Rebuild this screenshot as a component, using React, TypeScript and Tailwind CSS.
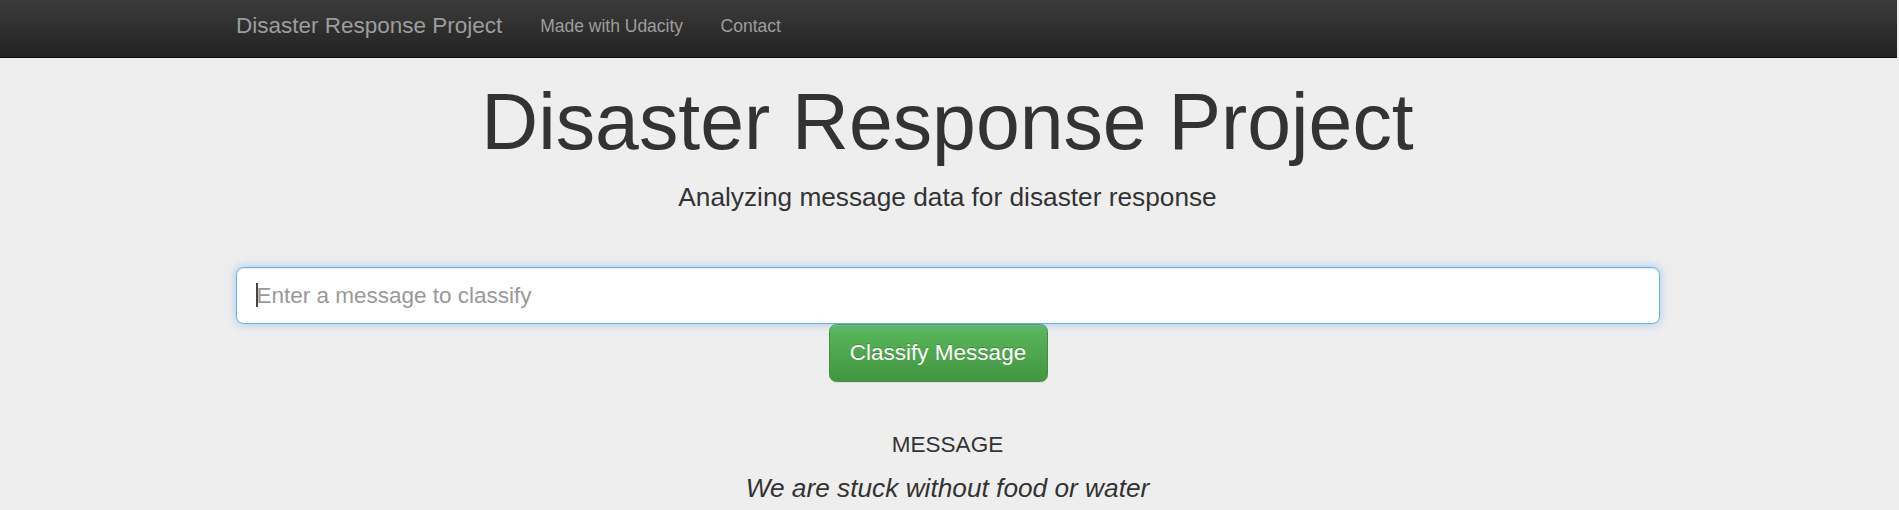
export default function App() {
  return (
    <div className="min-h-[510px] bg-[#eeeeee] font-['Liberation_Sans',Arial,sans-serif] text-[#333333]">
      <div className="w-[1895px]">
        {/* Navbar */}
        <nav className="h-[58px] w-[1897px] border-b border-[#080808] bg-gradient-to-b from-[#3c3c3c] to-[#222222]">
          <div className="flex items-start pl-[236px] text-[#9d9d9d]">
            <a className="pt-[13px] text-[22.5px] leading-[25px] pr-[19px]">Disaster Response Project</a>
            <a className="px-[18.75px] pt-[15.5px] text-[17.5px] leading-[20px]">Made with Udacity</a>
            <a className="px-[18.75px] pt-[15.5px] text-[17.5px] leading-[20px]">Contact</a>
          </div>
        </nav>

        {/* Jumbotron */}
        <div className="flex flex-col items-center">
          <h1 className="mt-[21px] text-[78.75px] leading-[87px] font-normal">Disaster Response Project</h1>
          <p className="mt-[13px] text-[26.25px] leading-[36px]">Analyzing message data for disaster response</p>

          <div className="mt-[52px] w-[1424px]">
            <div className="relative">
              <input
                type="text"
                placeholder="Enter a message to classify"
                className="block h-[57px] w-full rounded-[7.5px] border-[1.25px] border-[#66afe9] bg-white px-[20px] text-[22.5px] text-[#555555] outline-none shadow-[inset_0_1px_1px_rgba(0,0,0,0.075),0_0_10px_rgba(102,175,233,0.6)] placeholder:text-[#999999]"
              />
              {/* text caret of the focused field */}
              <span className="pointer-events-none absolute left-[20px] top-[16px] h-[24px] w-[2px] bg-[#444444]" />
            </div>
            <button className="ml-[593px] block h-[57.5px] w-[219px] rounded-[7.5px] border-[1.25px] border-[#3e8f3e] bg-gradient-to-b from-[#5cb85c] to-[#419641] text-[22.5px] text-white [text-shadow:0_-1px_0_rgba(0,0,0,0.2)] shadow-[inset_0_1px_0_rgba(255,255,255,0.15),0_1px_1px_rgba(0,0,0,0.075)]">
              Classify Message
            </button>
          </div>

          <h4 className="mt-[50px] text-[22.5px] leading-[25px]">MESSAGE</h4>
          <p className="mt-[16px] text-[26.25px] italic leading-[30px]">We are stuck without food or water</p>
        </div>
      </div>
    </div>
  );
}
